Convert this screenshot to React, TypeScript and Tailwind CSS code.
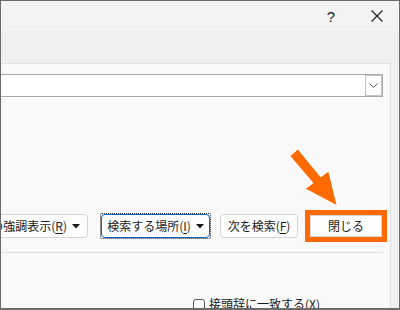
import React from 'react';

const jp = { fontFamily: '"Noto Sans CJK JP", "Noto Sans", sans-serif' };

function Caret() {
  return (
    <svg width="8" height="5" viewBox="0 0 8 5" className="ml-[5px]">
      <path d="M0 0 L8 0 L4 4.5 Z" fill="#1a1a1a" />
    </svg>
  );
}

export default function App() {
  return (
    <div
      className="w-[400px] h-[310px] border border-[#6b6b6b] border-b-2 overflow-hidden relative bg-[#efefef] text-[#1a1a1a] flex flex-col"
      style={jp}
    >
      {/* title bar */}
      <div className="h-[30px] bg-[#f3f3f3] flex items-center justify-end shrink-0">
        <span className="text-[15px] leading-none mr-[36px] mt-[1px]" style={{ fontFamily: '"Liberation Sans", sans-serif' }}>?</span>
        <svg width="12" height="12" viewBox="0 0 12 12" className="mr-[16px]">
          <path d="M0.5 0.5 L11.5 11.5 M11.5 0.5 L0.5 11.5" stroke="#1a1a1a" strokeWidth="1.1" />
        </svg>
      </div>

      {/* band */}
      <div className="h-[32px] bg-[#efefef] shrink-0" />

      <div className="flex flex-1 min-h-0">
        {/* panel */}
        <div className="w-[390px] bg-[#f9f9f9] border-t border-r border-[#e2e2e2] flex flex-col overflow-hidden">
          {/* input */}
          <div className="shrink-0 mt-[10px] w-[382px] h-[23px] bg-white border border-l-0 border-[#a8a8a8] flex justify-end">
            <div className="w-[17px] h-full border border-[#c4c4c4] bg-white flex items-center justify-center">
              <svg width="9" height="5" viewBox="0 0 9 5">
                <path d="M0.5 0.5 L4.5 4.5 L8.5 0.5" stroke="#555" fill="none" strokeWidth="1" />
              </svg>
            </div>
          </div>

          {/* buttons row */}
          <div className="shrink-0 mt-[113px] h-[32px] flex items-center text-[12px] leading-none">
            <div className="ml-[-26px] w-[113px] h-[24px] bg-white border border-[#d4d4d4] rounded-[4px] flex items-center justify-end pr-[7px] whitespace-nowrap">
              の強調表示(<span className="underline underline-offset-2">R</span>)<Caret />
            </div>
            <div className="ml-[12px] w-[111px] h-[26px] border border-dotted border-[#222] rounded-[2px]">
              <div className="w-full h-full bg-white border-[1.5px] border-[#0067c0] rounded-[4px] flex items-center justify-center whitespace-nowrap">
                検索する場所(<span className="underline underline-offset-2">I</span>)<Caret />
              </div>
            </div>
            <div className="ml-[9px] w-[78px] h-[24px] bg-white border border-[#d4d4d4] rounded-[4px] flex items-center justify-center whitespace-nowrap">
              次を検索(<span className="underline underline-offset-2">F</span>)
            </div>
            <div className="ml-[7px] w-[82px] h-[32px] border-[5px] border-[#ff6a00]">
              <div className="w-full h-full bg-white border border-[#d4d4d4] flex items-center justify-center">
                閉じる
              </div>
            </div>
          </div>

          {/* separator */}
          <div className="shrink-0 mt-[10px] w-[382px] h-px bg-[#dedede]" />

          {/* checkbox */}
          <div className="shrink-0 mt-[46px] ml-[192px] flex items-start text-[12px] leading-none whitespace-nowrap">
            <div className="w-[12px] h-[12px] border border-[#555] rounded-[3px] bg-white" />
            <span className="ml-[4px] mt-[-1px]">接頭辞に一致する(X)</span>
          </div>
        </div>
        <div className="flex-1 bg-[#f0f0f0]" />
      </div>

      {/* annotation arrow */}
      <svg className="absolute left-0 top-0 pointer-events-none" width="400" height="310">
        <polygon
          points="288,155 297,147 320,175 328,169 337,206 303,188 311,182"
          fill="#ff6a00"
          stroke="#ffffff"
          strokeWidth="2"
          strokeLinejoin="round"
        />
      </svg>
    </div>
  );
}
